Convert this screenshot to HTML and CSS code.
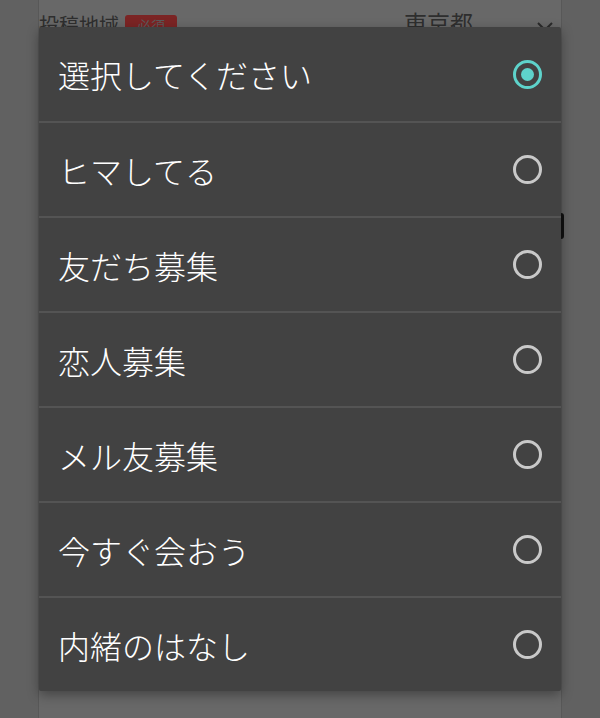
FILE: index.html
```html
<!DOCTYPE html>
<html lang="ja">
<head>
    <meta charset="UTF-8">
    <meta name="viewport" content="width=device-width, initial-scale=1.0">
    <title>投稿</title>
    <link rel="stylesheet" href="styles.css">
</head>
<body>

<div class="page">
    <div class="field-row">
        <span class="field-label">投稿地域</span>
        <span class="badge">必須</span>
        <span class="field-value">東京都</span>
        <span class="chevron">
            <svg width="16" height="10" viewBox="0 0 16 10"><path d="M1 1 L8 8 L15 1" fill="none" stroke="#2a2a2a" stroke-width="2"/></svg>
        </span>
    </div>
    <div class="field-box"></div>
</div>

<!-- 選択ダイアログ -->
<div class="dialog">
    <label class="option selected">
        <span class="option-text">選択してください</span>
        <span class="radio"></span>
    </label>
    <label class="option">
        <span class="option-text">ヒマしてる</span>
        <span class="radio"></span>
    </label>
    <label class="option">
        <span class="option-text">友だち募集</span>
        <span class="radio"></span>
    </label>
    <label class="option">
        <span class="option-text">恋人募集</span>
        <span class="radio"></span>
    </label>
    <label class="option">
        <span class="option-text">メル友募集</span>
        <span class="radio"></span>
    </label>
    <label class="option">
        <span class="option-text">今すぐ会おう</span>
        <span class="radio"></span>
    </label>
    <label class="option">
        <span class="option-text">内緒のはなし</span>
        <span class="radio"></span>
    </label>
</div>

</body>
</html>
```

FILE: styles.css
```css
body {
    margin: 0;
    background-color: #616161;
    font-family: "Noto Sans CJK JP", "Noto Sans", sans-serif;
    height: 718px;
    overflow: hidden;
}
.page {
    margin: 0 38px;
    height: 718px;
    background-color: #686868;
    border-left: 1px solid #585858;
    border-right: 1px solid #585858;
}
.field-row {
    display: flex;
    align-items: center;
    height: 44px;
    color: #2e2e2e;
}
.field-label {
    font-size: 20px;
    margin-top: 4px;
}
.badge {
    background-color: #7b2424;
    color: #5a5a5a;
    font-size: 14px;
    border-radius: 3px;
    padding: 0 12px;
    margin-left: 6px;
    margin-top: 6px;
    line-height: 20px;
}
.field-value {
    font-size: 23px;
    margin-left: auto;
    margin-right: 64px;
}
.chevron {
    margin-right: 8px;
    margin-top: 6px;
}
.field-box {
    margin-top: 169px;
    margin-right: -3px;
    height: 26px;
    border-right: 3px solid #111;
    border-radius: 0 3px 3px 0;
}
/* ダイアログ */
.dialog {
    position: absolute;
    top: 27px;
    left: 39px;
    width: 522px;
    background-color: #424242;
    border-radius: 2px;
    box-shadow: 0 4px 12px rgba(0, 0, 0, 0.35);
}
.option {
    display: flex;
    align-items: center;
    justify-content: space-between;
    height: 93px;
    padding: 0 19px;
    border-top: 2px solid #545454;
}
.option:first-child {
    border-top: none;
    height: 94px;
}
.option-text {
    color: #fff;
    font-size: 32px;
    font-weight: 300;
}
.radio {
    width: 23px;
    height: 23px;
    border: 3px solid #c9c9c9;
    border-radius: 50%;
    margin-right: 0;
    position: relative;
}
.selected .radio {
    border-color: #5ed3cb;
}
.selected .radio::after {
    content: "";
    position: absolute;
    top: 5px;
    left: 5px;
    width: 13px;
    height: 13px;
    border-radius: 50%;
    background-color: #5ed3cb;
}
```
